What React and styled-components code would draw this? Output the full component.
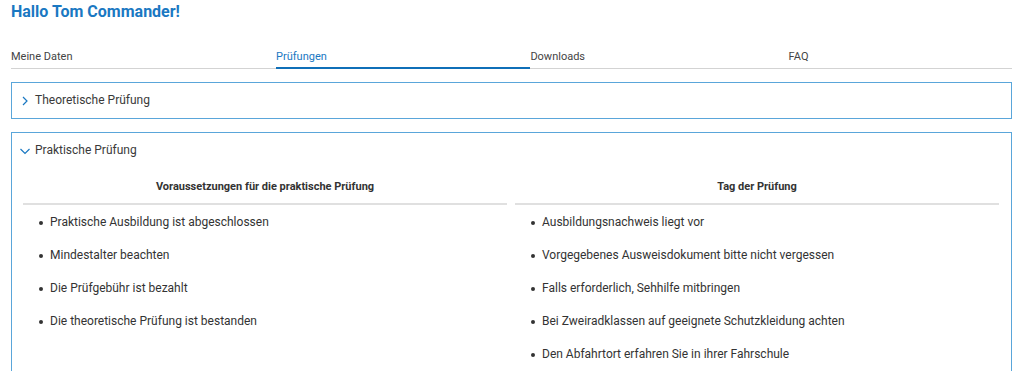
import React from 'react';
import styled, { createGlobalStyle } from 'styled-components';

const GlobalStyle = createGlobalStyle`
    body {
        margin: 0;
        background: #ffffff;
        font-family: Roboto, "Liberation Sans", sans-serif;
        color: #333333;
    }
`;

const Page = styled.div`
    padding: 2px 12px 24px 11px;
`;

const Title = styled.h1`
    margin: 0;
    font-size: 16px;
    line-height: 19px;
    font-weight: 700;
    color: #1a78c2;
`;

const Tabs = styled.div`
    display: flex;
    margin-top: 29px;
    border-bottom: 1px solid #d3d3d3;
`;

const Tab = styled.div`
    flex: 1 1 auto;
    font-size: 11px;
    line-height: 13px;
    padding-bottom: 4px;
    margin-bottom: -1px;
    color: ${props => props.active ? '#1a78c2' : '#444444'};
    border-bottom: 2px solid ${props => props.active ? '#0f6fb8' : 'transparent'};
`;

const Panel = styled.div`
    margin-top: 13px;
    border: 1px solid #5aa6da;
`;

const PanelHead = styled.div`
    display: flex;
    align-items: center;
    gap: 4px;
    padding: 10px 7px;
    font-size: 12px;
    line-height: 15px;
    color: #3a3a3a;
`;

const Chevron = styled.svg`
    width: 12px;
    height: 12px;
    flex: none;
`;

const Columns = styled.div`
    display: grid;
    grid-template-columns: 1fr 1fr;
    column-gap: 8px;
    padding: 0 12px 8px 11px;
`;

const ColumnHead = styled.div`
    padding: 12px 0 10px;
    text-align: center;
    font-size: 11px;
    line-height: 13px;
    font-weight: 700;
    color: #333333;
    border-bottom: 2px solid #e0e0e0;
`;

const List = styled.ul`
    list-style: none;
    margin: 0;
    padding: 1px 0 0 16px;
`;

const Item = styled.li`
    display: flex;
    align-items: center;
    gap: 7px;
    padding: 9px 0;
    font-size: 12px;
    line-height: 15px;
    color: #333333;

    &::before {
        content: '';
        width: 4px;
        height: 4px;
        border-radius: 50%;
        background: #333333;
        flex: none;
    }
`;

const ChevronRight = () => (
    <Chevron viewBox="0 0 12 12">
        <path d="M4 2 L8 6 L4 10" fill="none" stroke="#1a78c2" strokeWidth="1.2" />
    </Chevron>
);

const ChevronDown = () => (
    <Chevron viewBox="0 0 12 12">
        <path d="M1.5 4 L6 8.5 L10.5 4" fill="none" stroke="#1a78c2" strokeWidth="1.2" />
    </Chevron>
);

const tabs = ['Meine Daten', 'Prüfungen', 'Downloads', 'FAQ'];

const columns = [
    {
        title: 'Voraussetzungen für die praktische Prüfung',
        items: [
            'Praktische Ausbildung ist abgeschlossen',
            'Mindestalter beachten',
            'Die Prüfgebühr ist bezahlt',
            'Die theoretische Prüfung ist bestanden'
        ]
    },
    {
        title: 'Tag der Prüfung',
        items: [
            'Ausbildungsnachweis liegt vor',
            'Vorgegebenes Ausweisdokument bitte nicht vergessen',
            'Falls erforderlich, Sehhilfe mitbringen',
            'Bei Zweiradklassen auf geeignete Schutzkleidung achten',
            'Den Abfahrtort erfahren Sie in ihrer Fahrschule'
        ]
    }
];

const App = () => {
    return (
        <Page>
            <GlobalStyle />
            <Title>Hallo Tom Commander!</Title>
            <Tabs>
                {tabs.map(t => <Tab key={t} active={t === 'Prüfungen'}>{t}</Tab>)}
            </Tabs>

            <Panel>
                <PanelHead><ChevronRight />Theoretische Prüfung</PanelHead>
            </Panel>

            <Panel>
                <PanelHead><ChevronDown />Praktische Prüfung</PanelHead>
                <Columns>
                    {columns.map(col => (
                        <div key={col.title}>
                            <ColumnHead>{col.title}</ColumnHead>
                            <List>
                                {col.items.map(i => <Item key={i}>{i}</Item>)}
                            </List>
                        </div>
                    ))}
                </Columns>
            </Panel>
        </Page>
    );
};

export default App;
